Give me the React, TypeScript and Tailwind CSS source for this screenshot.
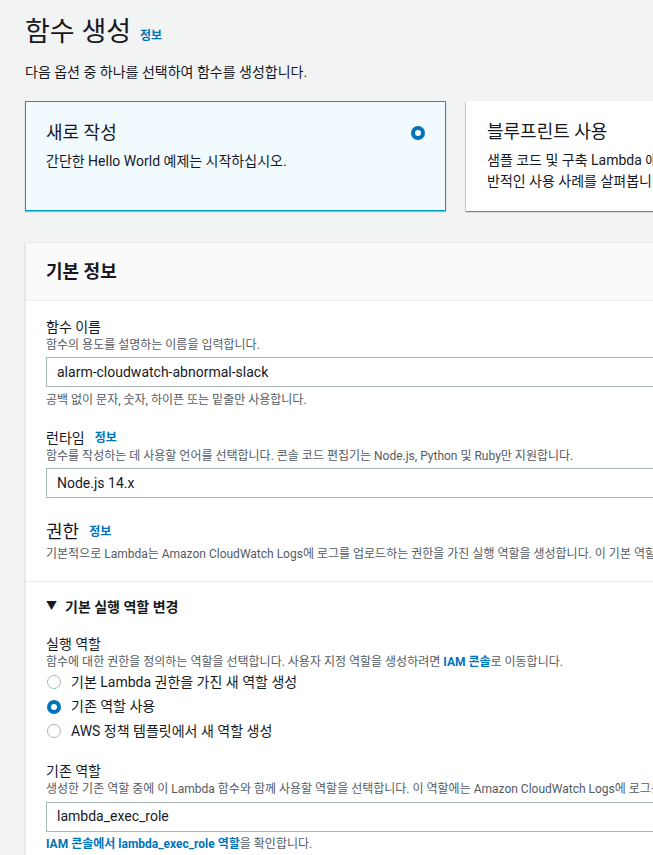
import React from 'react';

const font = { fontFamily: 'Roboto, "Noto Sans CJK KR", sans-serif' };

const Info = ({ className = '' }: { className?: string }) => (
  <span className={`text-[12px] font-bold text-[#0073bb] ${className}`}>정보</span>
);

const Radio = ({ checked }: { checked?: boolean }) =>
  checked ? (
    <span className="w-[14px] h-[14px] rounded-full bg-[#0073bb] flex items-center justify-center shrink-0">
      <span className="w-[6px] h-[6px] rounded-full bg-white" />
    </span>
  ) : (
    <span className="w-[14px] h-[14px] rounded-full border border-[#aab7b8] bg-white shrink-0" />
  );

const Field = ({ label, desc, value, gap = 'mt-[4px]' }: { label: React.ReactNode; desc: React.ReactNode; value: string; gap?: string }) => (
  <div>
    <div className="text-[14px] leading-[20px] text-[#16191f]">{label}</div>
    <div className="text-[12px] leading-[16px] text-[#545b64]">{desc}</div>
    <div className={`${gap} h-[30px] border border-[#aab7b8] bg-white flex items-center px-[10px] text-[14px] text-[#16191f]`}>
      {value}
    </div>
  </div>
);

export default function App() {
  const roles = [
    { label: '기본 Lambda 권한을 가진 새 역할 생성', checked: false },
    { label: '기존 역할 사용', checked: true },
    { label: 'AWS 정책 템플릿에서 새 역할 생성', checked: false },
  ];

  return (
    <div className="min-h-screen bg-[#f2f3f3] overflow-hidden" style={font}>
      <div className="w-[1100px] pl-[25px] pt-[14px]">
        <div className="flex items-end gap-[9px]">
          <h1 className="text-[27px] leading-[36px] text-[#16191f]">함수 생성</h1>
          <Info className="mb-[5px]" />
        </div>
        <p className="mt-[12px] text-[14px] leading-[20px] text-[#16191f]">다음 옵션 중 하나를 선택하여 함수를 생성합니다.</p>

        <div className="mt-[19px] flex gap-[20px]">
          <div className="w-[421px] h-[110px] border border-[#00a1c9] bg-[#f1faff] px-[20px] pt-[18px] shadow-[0_1px_1px_0_rgba(0,28,36,0.3)]">
            <div className="flex items-center justify-between">
              <span className="text-[18px] leading-[26px] text-[#16191f]">새로 작성</span>
              <Radio checked />
            </div>
            <div className="mt-[5px] text-[14px] leading-[20px] text-[#16191f]">간단한 Hello World 예제는 시작하십시오.</div>
          </div>
          <div className="w-[421px] h-[110px] bg-white px-[21px] pt-[18px] shadow-[0_1px_1px_0_rgba(0,28,36,0.3),1px_1px_1px_0_rgba(0,28,36,0.15),-1px_1px_1px_0_rgba(0,28,36,0.15)]">
            <div className="text-[18px] leading-[26px] text-[#16191f]">블루프린트 사용</div>
            <div className="mt-[5px] text-[14px] leading-[21px] text-[#16191f] whitespace-nowrap">
              샘플 코드 및 구축 Lambda 애플리케이션의 구성 사전 설정을 통해 일
              <br />
              반적인 사용 사례를 살펴봅니다.
            </div>
          </div>
        </div>

        <div className="mt-[31px] w-[900px] bg-white border-l border-t border-[#eaeded] shadow-[0_1px_1px_0_rgba(0,28,36,0.3)]">
          <div className="h-[58px] bg-[#fafafa] border-b border-[#eaeded] flex items-center px-[20px]">
            <h2 className="text-[18px] font-bold text-[#16191f]">기본 정보</h2>
          </div>

          <div className="px-[20px] pt-[16px] flex flex-col">
            <Field label="함수 이름" desc="함수의 용도를 설명하는 이름을 입력합니다." value="alarm-cloudwatch-abnormal-slack" />
            <div className="mt-[5px] text-[12px] leading-[16px] text-[#545b64]">공백 없이 문자, 숫자, 하이픈 또는 밑줄만 사용합니다.</div>

            <div className="mt-[20px]">
              <Field
                label={
                  <span className="flex items-center gap-[10px]">
                    런타임 <Info />
                  </span>
                }
                desc="함수를 작성하는 데 사용할 언어를 선택합니다. 콘솔 코드 편집기는 Node.js, Python 및 Ruby만 지원합니다."
                value="Node.js 14.x"
              />
            </div>

            <div className="mt-[21px] flex items-center gap-[10px]">
              <span className="text-[18px] leading-[26px] text-[#16191f]">권한</span>
              <Info />
            </div>
            <div className="mt-[1px] text-[12px] leading-[16px] text-[#545b64] whitespace-nowrap">
              기본적으로 Lambda는 Amazon CloudWatch Logs에 로그를 업로드하는 권한을 가진 실행 역할을 생성합니다. 이 기본 역할은 나중에 트리거를 추가할 때 사용자 지정할 수 있습니다.
            </div>
          </div>

          <div className="mt-[19px] border-t border-[#eaeded]" />

          <div className="px-[20px] pt-[15px] pb-[20px]">
            <div className="flex items-center gap-[8px] text-[14px] font-bold text-[#16191f]">
              <span className="text-[11px]">▼</span>
              <span>기본 실행 역할 변경</span>
            </div>

            <div className="mt-[16px] text-[14px] leading-[20px] text-[#16191f]">실행 역할</div>
            <div className="text-[12px] leading-[16px] text-[#545b64]">
              함수에 대한 권한을 정의하는 역할을 선택합니다. 사용자 지정 역할을 생성하려면{' '}
              <span className="font-bold text-[#0073bb]">IAM 콘솔</span>로 이동합니다.
            </div>

            <div className="mt-[0px] flex flex-col">
              {roles.map((r) => (
                <div key={r.label} className="h-[24.5px] flex items-center gap-[10px] pl-[1px] text-[14px] text-[#16191f]">
                  <Radio checked={r.checked} />
                  <span>{r.label}</span>
                </div>
              ))}
            </div>

            <div className="mt-[17px]">
              <Field
                label="기존 역할"
                gap="mt-[5px]"
                desc={
                  <span className="whitespace-nowrap">
                    생성한 기존 역할 중에 이 Lambda 함수와 함께 사용할 역할을 선택합니다. 이 역할에는 Amazon CloudWatch Logs에 로그를 업로드할 수 있는 권한이 있어야 합니다.
                  </span>
                }
                value="lambda_exec_role"
              />
            </div>
            <div className="mt-[4px] text-[12px] leading-[16px] text-[#545b64]">
              <span className="font-bold text-[#0073bb]">IAM 콘솔에서 lambda_exec_role 역할</span>을 확인합니다.
            </div>
          </div>
        </div>
      </div>
    </div>
  );
}
